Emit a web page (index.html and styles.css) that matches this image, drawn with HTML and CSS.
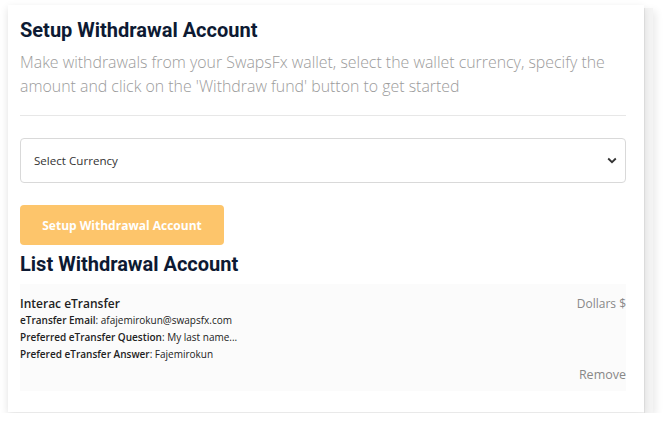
FILE: index.html
```html
<!DOCTYPE html>
<html>
<head>
<meta charset="utf-8">
<link rel="stylesheet" href="styles.css">
</head>
<body>
<div class="wrap">
  <div class="card">
    <h1 class="title">Setup Withdrawal Account</h1>
    <p class="desc">Make withdrawals from your SwapsFx wallet, select the wallet currency, specify the amount and click on the 'Withdraw fund' button to get started</p>
    <hr class="divider">
    <div class="select">
      <span>Select Currency</span>
      <svg class="chev" width="10" height="7" viewBox="0 0 10 7"><path d="M1.2 1.5 L5 5.2 L8.8 1.5" fill="none" stroke="#333" stroke-width="1.8"/></svg>
    </div>
    <button class="btn">Setup Withdrawal Account</button>
    <h2 class="title sub">List Withdrawal Account</h2>
    <div class="item">
      <div class="row">
        <div class="name">Interac eTransfer</div>
        <div class="cur">Dollars $</div>
      </div>
      <div class="line"><b>eTransfer Email</b>: afajemirokun@swapsfx.com</div>
      <div class="line"><b>Preferred eTransfer Question</b>: My last name...</div>
      <div class="line"><b>Prefered eTransfer Answer</b>: Fajemirokun</div>
      <div class="remove">Remove</div>
    </div>
  </div>
  <div class="strip"></div>
</div>
</body>
</html>
```
FILE: styles.css
```css
* { box-sizing: border-box; }
body {
  margin: 0;
  background: #fff;
  font-family: "Open Sans", "Liberation Sans", sans-serif;
}
.wrap {
  display: flex;
  align-items: flex-start;
  padding: 5px 0 0 8px;
}
.card {
  width: 636px;
  height: 407px;
  background: #fff;
  padding: 14px 18px 0 12px;
  box-shadow: 0 3px 8px rgba(0,0,0,0.12);
  position: relative;
  z-index: 1;
}
.strip {
  width: 9px;
  height: 405px;
  margin-top: 3px;
  background: #f4f4f4;
  border-left: 1px solid #e8e8e8;
  box-shadow: 2px 3px 8px rgba(0,0,0,0.10);
}
.title {
  margin: 0;
  font-family: "Roboto", sans-serif;
  font-weight: 700;
  font-size: 20px;
  line-height: 22px;
  color: #0d1a33;
}
.desc {
  margin: 9px 0 0;
  font-weight: 300;
  font-size: 15.9px;
  line-height: 24px;
  color: #9b9b9b;
}
.divider {
  margin: 17px 0 0;
  border: 0;
  border-top: 1px solid #e7e7e7;
}
.select {
  margin-top: 22px;
  height: 45px;
  border: 1px solid #d9d9d9;
  border-radius: 4px;
  display: flex;
  align-items: center;
  justify-content: space-between;
  padding: 0 8px 0 13px;
  font-size: 11.6px;
  color: #333;
}
.btn {
  margin-top: 22px;
  width: 204px;
  height: 40px;
  border: 0;
  border-radius: 4px;
  background: #fdc56b;
  color: #fff;
  font-family: "Open Sans", sans-serif;
  font-weight: 700;
  font-size: 12px;
  display: block;
}
.sub { margin-top: 8px; }
.item {
  margin-top: 9px;
  background: #fbfbfb;
  height: 107px;
  padding-top: 11px;
}
.row {
  display: flex;
  justify-content: space-between;
  align-items: center;
}
.name {
  font-size: 12px;
  font-weight: 600;
  color: #222;
}
.cur {
  font-size: 12px;
  color: #888;
}
.line {
  font-size: 10px;
  line-height: 17px;
  color: #222;
}
.line:first-of-type { margin-top: 2px; }
.line b { font-weight: 600; }
.remove {
  text-align: right;
  font-size: 12.5px;
  color: #888;
  margin-top: 3px;
}
```
